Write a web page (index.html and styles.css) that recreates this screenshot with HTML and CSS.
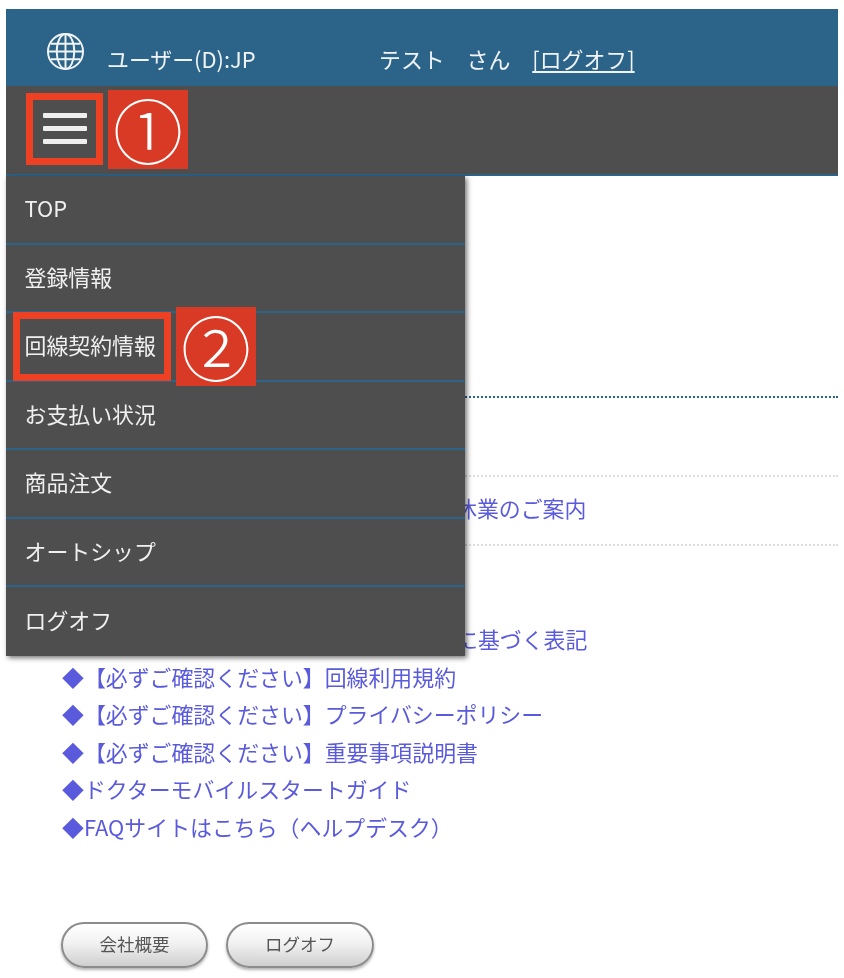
FILE: index.html
```html
<!DOCTYPE html>
<html lang="ja">
<head>
<meta charset="utf-8">
<title>マイページ</title>
<link rel="stylesheet" href="styles.css">
</head>
<body>
<div class="page">
  <header class="topbar">
    <svg class="globe" viewBox="0 0 40 40" width="39" height="39" fill="none" stroke="currentColor" stroke-width="2">
      <circle cx="20" cy="20" r="18"/>
      <ellipse cx="20" cy="20" rx="9" ry="18"/>
      <path d="M20 2v36M2 20h36M5 12h30M5 28h30"/>
    </svg>
    <span class="user">ユーザー(D):JP</span>
    <span class="name">テスト　さん　<a href="#" class="logoff">[ログオフ]</a></span>
  </header>
  <nav class="navbar">
    <button class="burger" aria-label="menu"><span></span><span></span><span></span></button>
  </nav>
  <main class="content">
    <div class="rule-blue"></div>
    <div class="news">
      <a href="#" class="link">◆【重要】ドクターモバイル 2024年度休業のご案内</a>
    </div>
    <ul class="links">
      <li><a href="#" class="link">◆【必ずご確認ください】特定商取引法に基づく表記</a></li>
      <li><a href="#" class="link">◆【必ずご確認ください】回線利用規約</a></li>
      <li><a href="#" class="link">◆【必ずご確認ください】プライバシーポリシー</a></li>
      <li><a href="#" class="link">◆【必ずご確認ください】重要事項説明書</a></li>
      <li><a href="#" class="link">◆ドクターモバイルスタートガイド</a></li>
      <li><a href="#" class="link">◆FAQサイトはこちら（ヘルプデスク）</a></li>
    </ul>
    <div class="buttons">
      <button class="pill">会社概要</button>
      <button class="pill pill-wide">ログオフ</button>
    </div>
  </main>
  <ul class="menu">
    <li>TOP</li>
    <li>登録情報</li>
    <li>回線契約情報</li>
    <li>お支払い状況</li>
    <li>商品注文</li>
    <li>オートシップ</li>
    <li>ログオフ</li>
  </ul>
  <div class="mark mark-burger"></div>
  <div class="badge badge-one">①</div>
  <div class="mark mark-item"></div>
  <div class="badge badge-two">②</div>
</div>
</body>
</html>
```
FILE: styles.css
```css
* { box-sizing: border-box; }
html, body { margin: 0; padding: 0; background: #fff; }
body {
  font-family: "Noto Sans CJK JP", "Noto Sans", "Liberation Sans", sans-serif;
  font-size: 21.9px;
  overflow: hidden;
  height: 978px;
}
.page {
  position: relative;
  margin: 9px 6px 0;
  width: 832px;
  filter: blur(0.45px);
}
.topbar {
  height: 77px;
  background: #2c6489;
  color: #f0f4f7;
  display: flex;
  align-items: center;
  padding: 22px 0 0 41px;
  line-height: 1;
}
.globe { flex: none; margin-top: -14px; margin-left: -1px; }
.user { margin-left: 22px; width: 272px; }
.name { white-space: pre; }
.logoff {
  color: inherit;
  text-decoration: underline;
  text-decoration-skip-ink: none;
  text-underline-offset: 3px;
}
.navbar {
  height: 90px;
  background: #4e4e4e;
  border-bottom: 2px solid #2c6489;
  display: flex;
  align-items: center;
  padding: 0 0 0 37px;
}
.burger {
  width: 44px;
  padding: 0;
  margin-top: -4px;
  border: 0;
  background: none;
  display: flex;
  flex-direction: column;
  gap: 8px;
}
.burger span { display: block; height: 5px; background: #eeeeee; border-radius: 1px; }
.content { padding: 0; color: #5a5add; }
.rule-blue {
  margin-top: 220px;
  border-top: 2px dotted #2c6489;
}
.news {
  margin-top: 77px;
  height: 71px;
  padding-left: 68px;
  padding-bottom: 6px;
  border-top: 2px dotted #dddddd;
  border-bottom: 2px dotted #dddddd;
  display: flex;
  align-items: center;
  line-height: 1;
}
.link { color: #5a5add; text-decoration: none; white-space: nowrap; }
.links {
  list-style: none;
  margin: 74px 0 0;
  padding: 0 0 0 56px;
  line-height: 37.5px;
}
.buttons {
  display: flex;
  gap: 18px;
  margin: 77px 0 0 55px;
}
.pill {
  width: 147px;
  height: 46px;
  border: 2px solid #8c8c8c;
  border-radius: 23px;
  background: linear-gradient(#ffffff, #f2f2f2 45%, #cfcfcf);
  box-shadow: 0 2px 3px rgba(0, 0, 0, .3);
  color: #555;
  font: 17.5px "Noto Sans CJK JP", sans-serif;
  padding: 0 0 4px;
}
.pill-wide { width: 148px; }
.menu {
  position: absolute;
  left: 0;
  top: 167px;
  width: 459px;
  margin: 0;
  padding: 0;
  list-style: none;
  background: #4e4e4e;
  color: #f0f0f0;
  box-shadow: 2px 2px 5px rgba(0, 0, 0, .55);
}
.menu li {
  height: 68.5px;
  padding: 0 0 2px 18.5px;
  display: flex;
  align-items: center;
  border-bottom: 2px solid #2c6489;
  line-height: 1;
}
.menu li:last-child { border-bottom: 0; }
.mark { position: absolute; border: 7px solid #ee4023; }
.mark-burger { left: 20px; top: 84px; width: 77px; height: 72px; }
.mark-item { left: 7px; top: 303px; width: 158px; height: 69px; }
.badge {
  position: absolute;
  width: 80px;
  height: 79px;
  background: #d93a25;
  color: #fff;
  font-size: 70px;
  font-weight: 300;
  line-height: 78px;
  text-align: center;
}
.badge-one { left: 102px; top: 81px; }
.badge-two { left: 170px; top: 298px; }
```
